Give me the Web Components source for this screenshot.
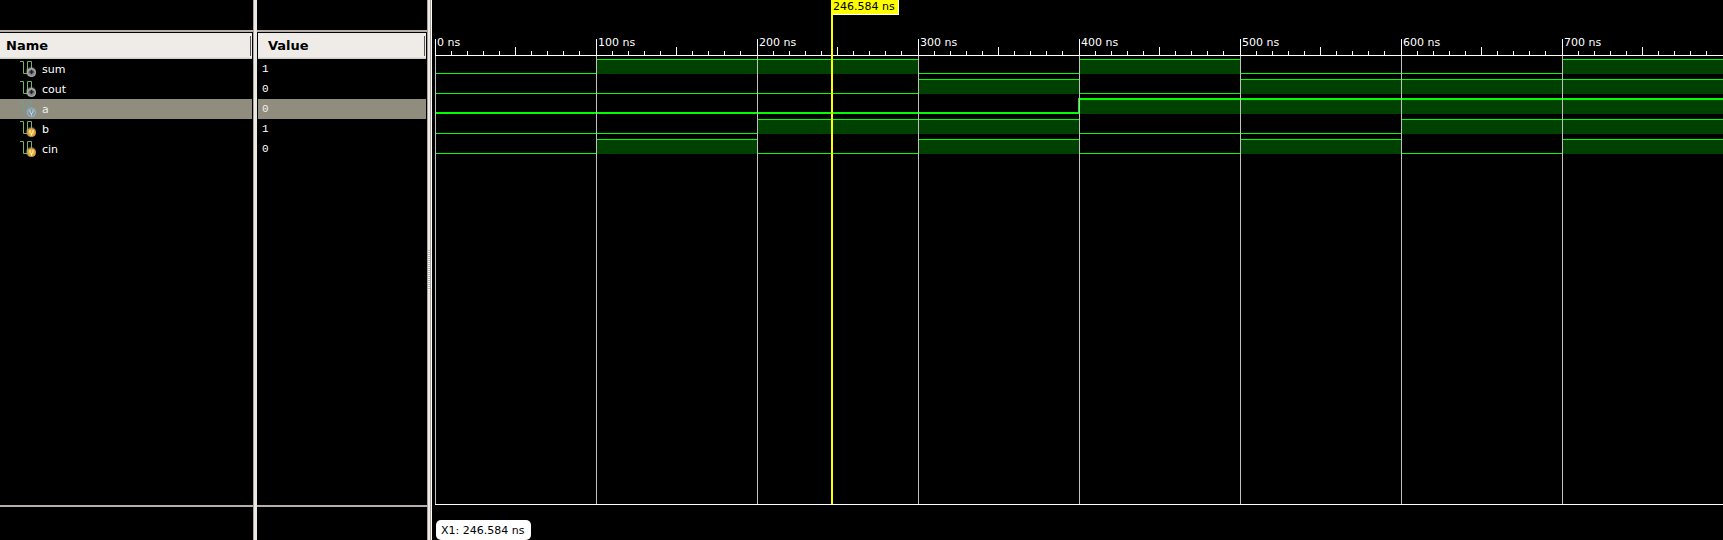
<!DOCTYPE html>
<html lang="en">
<head>
<meta charset="utf-8">
<title>Waveform</title>
<style>
  body { margin: 0; background: #000; color: #fff; font: 11px/20px "DejaVu Sans", sans-serif; }
</style>
</head>
<body>
<wave-viewer></wave-viewer>
<script>
const SIGNALS = [
  { name: 'sum',  value: '1', port: 'out', bits: '01101001' },
  { name: 'cout', value: '0', port: 'out', bits: '00010111' },
  { name: 'a',    value: '0', port: 'in',  bits: '00001111', selected: true },
  { name: 'b',    value: '1', port: 'in',  bits: '00110011' },
  { name: 'cin',  value: '0', port: 'in',  bits: '01010101' }
];

function define(name, html, setup) {
  customElements.define(name, class extends HTMLElement {
    constructor() {
      super();
      this.attachShadow({ mode: 'open' });
    }
    connectedCallback() {
      const t = document.createElement('template');
      t.innerHTML = typeof html === 'function' ? html(this) : html;
      this.shadowRoot.replaceChildren(t.content.cloneNode(true));
      if (setup) setup(this);
    }
  });
}

define('signal-icon', el => {
  const port = el.getAttribute('port');
  const sel = el.hasAttribute('selected');
  const line = sel ? '#6d9f94' : '#78b266';
  const fill = sel ? '#7593a8' : port === 'in' ? '#eeb02c' : '#858585';
  const rim = sel ? '#a3b9c2' : port === 'in' ? '#c89a45' : '#b5b5b5';
  const mark = port === 'in'
    ? `<path d="M10 9v2q0 1.500 1.500 1.500t1.500-1.500v-2M11.500 12v2.500" fill="none" stroke="${sel ? '#d5dcd6' : '#fff6d0'}"/>`
    : '<path d="M11.500 9v4M9.500 11h4" stroke="#222" stroke-width="1.500"/>';
  return `<style>:host{display:block;width:16px;height:16px}svg{display:block}</style>
  <svg width="16" height="16" viewBox="0 0 16 16" aria-hidden="true">
    <defs><radialGradient id="glow"><stop offset=".5" stop-color="${sel ? '#8a9a94' : '#aaa'}"/><stop offset="1" stop-color="#999" stop-opacity="0"/></radialGradient></defs>
    <path d="M0 .5h3.500v12h4V.5h4v8" fill="none" stroke="${line}"/>
    <circle cx="11" cy="11" r="6" fill="url(#glow)" opacity=".8"/>
    <circle cx="11.500" cy="11.500" r="4" fill="${fill}" stroke="${rim}"/>${mark}
  </svg>`;
});

define('signal-pane', el => {
  const field = el.getAttribute('field');
  const rows = SIGNALS.map(s => `<tr class="${s.selected ? 'sel' : ''}"><td>${
    field === 'name'
      ? `<div class="name"><signal-icon port="${s.port}"${s.selected ? ' selected' : ''}></signal-icon><span>${s.name}</span></div>`
      : s.value}</td></tr>`).join('');
  return `<style>
    :host{display:flex;flex-direction:column;min-width:0}
    .top{height:30px;border-bottom:2px solid #b7afa8}
    .list{flex:1;padding:1px 1px 0 0}
    :host([field="value"]) .list{padding-left:1px}
    .bottom{height:33px;border-top:2px solid #b7afa8}
    table{width:100%;border-collapse:collapse;table-layout:fixed}
    th{height:26px;padding:0;background:linear-gradient(#efebe7 92%,#c5c1bb);color:#000;font:bold 13px/16px "DejaVu Sans",sans-serif;text-align:left}
    th div{height:20px;line-height:20px;border-right:1px solid #555;margin-right:1px;padding-left:6px}
    :host([field="value"]) th div{padding-left:10px}
    td{height:20px;padding:0}
    .sel{background:#918d7e}
    .sel td{color:#eee}
    .name{display:flex;align-items:center;gap:6px;height:20px;padding-left:20px}
    .name span{line-height:18px;padding-top:2px}
    :host([field="value"]) td{padding-left:4px;font:11px/20px "Liberation Mono",monospace}
  </style>
  <div class="top"></div>
  <div class="list"><table><thead><tr><th scope="col"><div><slot></slot></div></th></tr></thead><tbody>${rows}</tbody></table></div>
  <div class="bottom"></div>`;
});

define('pane-splitter', `<style>
  :host{display:flex;align-items:center;box-sizing:border-box;background:#ece8e3;border-left:1px solid #aaa49f}
  :host([grip]){border-right:1px solid #fff;background:linear-gradient(90deg,#eeebe7 2px,#aaa198 2px)}
  i{display:none;width:2px;height:40px;background:repeating-linear-gradient(#bbb 0 1px,#fff 1px 2px)}
  :host([grip]) i{display:block}
</style><i></i>`);

define('time-ruler', () => {
  let cells = '';
  for (let t = 0; t < 800; t += 100)
    cells += `<div class="cell"><span>${t} ns</span><div class="ticks">${'<i></i>'.repeat(10)}</div></div>`;
  return `<style>
    :host{display:grid;grid-template-columns:repeat(8,1fr);height:16px;padding-top:39px;border-bottom:1px solid #fff}
    .cell{display:grid;border-left:1px solid #fff;margin-right:-1px;height:16px}
    .cell>*{grid-area:1/1}
    span{padding-left:1px;line-height:7px;height:7px;white-space:nowrap}
    .ticks{display:grid;grid-template-columns:repeat(9,16fr) 17fr;align-items:end;margin:0 1px 0 -1px;height:16px}
    i{height:4px;border-left:1px solid #fff}
    i:first-child{visibility:hidden}
    i:nth-child(6){height:8px}
  </style>${cells}`;
});

define('wave-signal', el => {
  const bits = [...el.getAttribute('bits')];
  return `<style>
    :host{display:grid;grid-template-columns:repeat(8,1fr);height:20px;--w:1px;--lift:0px}
    :host([selected]){--w:2px;--lift:1px}
    i{box-sizing:border-box;height:15px}
    .low{border-bottom:var(--w) solid #0f0}
    .high{background:#004000;border-top:var(--w) solid #0f0;height:calc(15px + var(--lift));margin-top:calc(0px - var(--lift))}
    :host([selected]) .rise{border-left:2px solid #0f0;margin-left:-1px}
  </style>${bits.map((b, i) => `<i class="${b === '1' ? 'high' : 'low'}${b === '1' && bits[i - 1] === '0' ? ' rise' : ''}"></i>`).join('')}`;
});

define('time-cursor', el => `<style>
    :host{position:absolute;top:0;bottom:0;left:calc(${el.getAttribute('time')} / 800 * 100% - 1px);border-left:2px solid #ff0}
    span{display:block;height:14px;line-height:14px;padding-right:3px;background:#ff0;color:#000;border:solid #fff;border-width:0 1px 1px 0;white-space:nowrap}
  </style><span>${el.getAttribute('time')} ns</span>`);

define('wave-chart', () => `<style>
    :host{display:flex;flex-direction:column;min-width:0;padding-left:3px}
    .plot{position:relative;flex:1;display:flex;flex-direction:column;border-bottom:1px solid #fff}
    .body{flex:1;display:grid}
    .body>*{grid-area:1/1}
    .waves{padding-top:3px}
    .grid{display:grid;grid-template-columns:repeat(8,1fr);z-index:1}
    .grid i{border-left:1px solid #c0c0c0}
    footer{display:flex;align-items:flex-end;height:35px}
    output{height:20px;line-height:22px;margin-left:1px;padding:0 7px 0 5px;border-radius:5px;background:#fff;color:#000;white-space:nowrap}
  </style>
  <div class="plot">
    <time-ruler></time-ruler>
    <div class="body">
      <div class="waves">${SIGNALS.map(s => `<wave-signal bits="${s.bits}"${s.selected ? ' selected' : ''}></wave-signal>`).join('')}</div>
      <div class="grid">${'<i></i>'.repeat(8)}</div>
    </div>
    <time-cursor time="246.584"></time-cursor>
  </div>
  <footer><output>X1: 246.584 ns</output></footer>`);

define('wave-viewer', `<style>
    :host{display:grid;grid-template-columns:253px 4px 170px 5px minmax(0,1fr);min-height:100vh;overflow:hidden}
  </style>
  <signal-pane field="name">Name</signal-pane>
  <pane-splitter></pane-splitter>
  <signal-pane field="value">Value</signal-pane>
  <pane-splitter grip></pane-splitter>
  <wave-chart></wave-chart>`);
</script>
</body>
</html>
